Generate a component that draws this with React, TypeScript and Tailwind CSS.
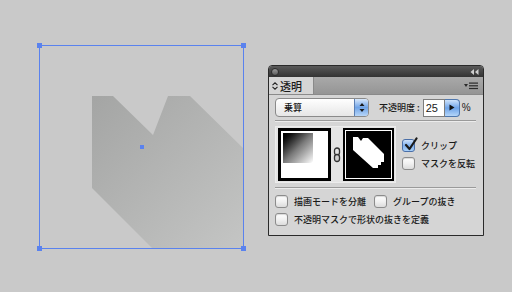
import React from 'react';

const jp = { fontFamily: '"Noto Sans CJK JP", "Liberation Sans", sans-serif' };

function Checkbox({ checked = false }: { checked?: boolean }) {
  if (checked) {
    return (
      <div className="relative w-[13px] h-[13px] shrink-0 rounded-[3px] border border-[#4a6fa8] bg-gradient-to-b from-[#cfe2fb] via-[#7fb0ee] to-[#a9d0f8]">
        <svg viewBox="0 0 14 14" className="absolute left-[1px] top-[-3px] w-[14px] h-[14px]">
          <path d="M2 8 L5.5 12 L12.5 1.5" fill="none" stroke="#1b1b1b" strokeWidth="2.2" strokeLinecap="round" strokeLinejoin="round" />
        </svg>
      </div>
    );
  }
  return (
    <div className="w-[13px] h-[13px] shrink-0 rounded-[3px] border border-[#8c8c8c] bg-gradient-to-b from-[#ffffff] via-[#f1f1f1] to-[#dcdcdc] shadow-[inset_0_1px_1px_rgba(0,0,0,0.15)]" />
  );
}

function Artwork() {
  return (
    <svg width="512" height="292" className="absolute left-0 top-0">
      <defs>
        <linearGradient id="shape" x1="92" y1="96" x2="243" y2="248" gradientUnits="userSpaceOnUse">
          <stop offset="0" stopColor="#a4a5a4" />
          <stop offset="1" stopColor="#c4c5c4" />
        </linearGradient>
      </defs>
      <polygon
        points="92,96 113,96 153,135 168,96 190,96 243,148 243,248 152,248 92,188"
        fill="url(#shape)"
      />
      <rect x="39.5" y="45.5" width="204" height="203" fill="none" stroke="#5a82ee" strokeWidth="1" />
      <rect x="37" y="43" width="5" height="5" fill="#5a82ee" />
      <rect x="241" y="43" width="5" height="5" fill="#5a82ee" />
      <rect x="37" y="246" width="5" height="5" fill="#5a82ee" />
      <rect x="241" y="246" width="5" height="5" fill="#5a82ee" />
      <rect x="140" y="145" width="4" height="4" fill="#5a82ee" />
    </svg>
  );
}

function TransparencyPanel() {
  return (
    <div className="absolute left-[268px] top-[65px] w-[216px] h-[171px] flex flex-col border border-[#2a2a2a] rounded-t-[4px] bg-[#d5d5d5] text-[9px] leading-[12px] font-medium text-[#1a1a1a]" style={jp}>
      {/* title bar */}
      <div className="h-[11px] flex items-center justify-between px-[2px] rounded-t-[3px] bg-gradient-to-b from-[#5a5a5a] to-[#333333]">
        <div className="w-[8px] h-[8px] rounded-full bg-gradient-to-b from-[#9a9a9a] to-[#5c5c5c] border border-[#2c2c2c]" />
        <svg width="9" height="6" viewBox="0 0 9 6" className="mr-[2px]">
          <path d="M4 0 L0.5 3 L4 6 Z M8.5 0 L5 3 L8.5 6 Z" fill="#cfcfcf" />
        </svg>
      </div>
      {/* tab row */}
      <div className="h-[18px] flex items-stretch bg-gradient-to-b from-[#a9a9a9] to-[#959595] border-b border-[#8a8a8a]">
        <div className="w-[45px] flex items-center gap-[2px] pl-[3px] bg-[#d5d5d5] text-[11px] border-r border-[#8a8a8a]">
          <svg width="6" height="8" viewBox="0 0 6 8">
            <path d="M0.5 3.2 L3 0.8 L5.5 3.2 M0.5 4.8 L3 7.2 L5.5 4.8" fill="none" stroke="#222" strokeWidth="1.1" />
          </svg>
          <span>透明</span>
        </div>
        <div className="flex-1" />
        <div className="flex items-center pr-[5px]">
          <svg width="14" height="8" viewBox="0 0 14 8">
            <path d="M0 2 L4 2 L2 5 Z" fill="#2b2b2b" />
            <rect x="5" y="0.5" width="9" height="1.2" fill="#2b2b2b" />
            <rect x="5" y="3.2" width="9" height="1.2" fill="#2b2b2b" />
            <rect x="5" y="5.9" width="9" height="1.2" fill="#2b2b2b" />
          </svg>
        </div>
      </div>
      {/* body */}
      <div className="flex-1 flex flex-col px-[6px] pt-[3px]">
        <div className="flex items-center h-[19px]">
          <div className="w-[94px] h-[19px] flex items-stretch rounded-[4px] border border-[#8a8a8a] bg-gradient-to-b from-[#ffffff] to-[#e6e6e6] overflow-hidden">
            <span className="flex-1 flex items-center pl-[8px]">乗算</span>
            <div className="w-[14px] flex items-center justify-center border-l border-[#5b7fb3] bg-gradient-to-b from-[#d8e8fb] via-[#6fa3e6] to-[#b7d6f8]">
              <svg width="6" height="11" viewBox="0 0 6 11">
                <path d="M0.5 4 L3 1 L5.5 4 Z M0.5 7 L3 10 L5.5 7 Z" fill="#1a1a1a" />
              </svg>
            </div>
          </div>
          <span className="ml-[10px] whitespace-nowrap">不透明度 :</span>
          <div className="ml-[3px] w-[22px] h-[18px] flex items-center pl-[2px] bg-white border border-[#7d7d7d] text-[11px] font-normal" style={{ fontFamily: '"Liberation Sans", sans-serif' }}>25</div>
          <div className="w-[15px] h-[18px] flex items-center justify-center rounded-r-[4px] border border-l-0 border-[#4f77ad] bg-gradient-to-b from-[#cfe3fb] via-[#6ea3e8] to-[#b5d6f9]">
            <svg width="6" height="7" viewBox="0 0 6 7">
              <path d="M0.5 0.5 L5.5 3.5 L0.5 6.5 Z" fill="#111" />
            </svg>
          </div>
          <span className="ml-[2px] text-[10px]" style={{ fontFamily: '"Liberation Sans", sans-serif' }}>%</span>
        </div>

        <div className="mt-[3px] w-[201px] h-[2px] border-t border-[#9a9a9a] border-b border-b-[#ececec]" />

        <div className="mt-[4px] flex items-start">
          <div className="w-[121px] h-[57px] flex items-center pl-[2px] gap-[2px] bg-[#e4e4e4] border border-[#ececec]">
            <div className="w-[53px] h-[53px] border-[3px] border-black bg-white p-[2px]">
              <div className="w-[30px] h-[30px] rounded-br-[3px] bg-gradient-to-br from-[#000000] via-[#7a7a7a] to-[#ffffff]" />
            </div>
            <svg width="8" height="16" viewBox="0 0 8 16">
              <rect x="1.5" y="1" width="5" height="7" rx="2.5" fill="none" stroke="#333" strokeWidth="1.3" />
              <rect x="1.5" y="7.5" width="5" height="7" rx="2.5" fill="#cfcfcf" stroke="#333" strokeWidth="1.3" />
            </svg>
            <div className="w-[51px] h-[53px] border-2 border-black bg-white p-[1px]">
              <div className="w-full h-full bg-black relative">
                <svg width="45" height="47" viewBox="346 133 45 47" className="absolute left-0 top-0">
                  <polygon
                    points="353,139 358,139 361,143 363,140 368,140 384,156 384,164 381,164 381,167 378,167 378,170 373,170 353,152"
                    fill="#ffffff"
                  />
                </svg>
              </div>
            </div>
          </div>
          <div className="ml-[6px] mt-[13px] flex flex-col gap-[5px]">
            <div className="flex items-center gap-[6px]">
              <Checkbox checked />
              <span className="whitespace-nowrap">クリップ</span>
            </div>
            <div className="flex items-center gap-[6px]">
              <Checkbox />
              <span className="whitespace-nowrap">マスクを反転</span>
            </div>
          </div>
        </div>

        <div className="mt-[4px] w-[201px] h-[2px] border-t border-[#9a9a9a] border-b border-b-[#ececec]" />

        <div className="mt-[6px] flex items-center">
          <Checkbox />
          <span className="ml-[6px] whitespace-nowrap">描画モードを分離</span>
          <div className="ml-[8px]"><Checkbox /></div>
          <span className="ml-[6px] whitespace-nowrap">グループの抜き</span>
        </div>
        <div className="mt-[5px] flex items-center">
          <Checkbox />
          <span className="ml-[6px] whitespace-nowrap">不透明マスクで形状の抜きを定義</span>
        </div>
      </div>
    </div>
  );
}

export default function App() {
  return (
    <div className="relative w-[512px] h-[292px] overflow-hidden bg-[#c9c9c9]">
      <Artwork />
      <TransparencyPanel />
    </div>
  );
}
